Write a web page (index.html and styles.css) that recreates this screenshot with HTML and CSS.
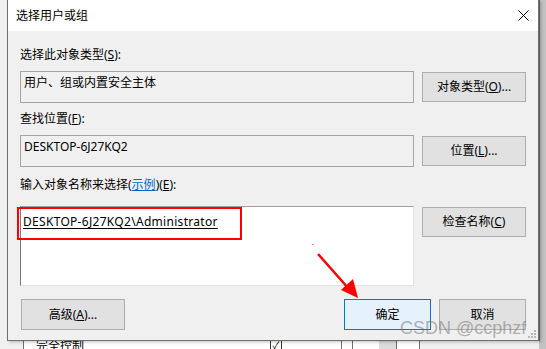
FILE: index.html
```html
<!DOCTYPE html>
<html lang="zh-CN">

<head>
    <meta charset="UTF-8">
    <meta name="viewport" content="width=device-width, initial-scale=1.0">
    <title>选择用户或组</title>
    <link rel="stylesheet" href="styles.css">
</head>

<body>
    <div class="desk">
        <!-- 后面的权限窗口，只露出一点 -->
        <div class="behind">
            <div class="cell name">完全控制</div>
            <div class="cell chk"><span class="box">✓</span></div>
            <div class="cell gap"></div>
            <div class="cell thin"></div>
            <div class="cell gap2"><span class="thumb"></span></div>
            <div class="cell last"></div>
        </div>

        <div class="dialog">
            <div class="titlebar">
                <span class="title">选择用户或组</span>
                <svg class="close" width="11" height="11" viewBox="0 0 11 11">
                    <path d="M0.5 0.5 L10.5 10.5 M10.5 0.5 L0.5 10.5" stroke="#000" stroke-width="1" fill="none" />
                </svg>
            </div>

            <div class="content">
                <div class="label">选择此对象类型(<u>S</u>):</div>
                <div class="row">
                    <div class="field">用户、组或内置安全主体</div>
                    <button class="btn">对象类型(<u>O</u>)...</button>
                </div>

                <div class="label l2">查找位置(<u>F</u>):</div>
                <div class="row">
                    <div class="field">DESKTOP-6J27KQ2</div>
                    <button class="btn">位置(<u>L</u>)...</button>
                </div>

                <div class="label l3">输入对象名称来选择(<a class="link">示例</a>)(<u>E</u>):</div>
                <div class="row tall">
                    <div class="field input">
                        <span class="resolved">DESKTOP-6J27KQ2\Administrator</span>
                        <span class="mark"></span>
                    </div>
                    <button class="btn">检查名称(<u>C</u>)</button>
                </div>

                <div class="actions">
                    <button class="btn adv">高级(<u>A</u>)...</button>
                    <button class="btn default">确定</button>
                    <button class="btn">取消</button>
                </div>
            </div>

            <svg class="grip" width="9" height="9" viewBox="0 0 9 9">
                <rect x="7" y="1" width="2" height="2" fill="#b8b8b8" />
                <rect x="4" y="4" width="2" height="2" fill="#b8b8b8" />
                <rect x="7" y="4" width="2" height="2" fill="#b8b8b8" />
                <rect x="1" y="7" width="2" height="2" fill="#b8b8b8" />
                <rect x="4" y="7" width="2" height="2" fill="#b8b8b8" />
                <rect x="7" y="7" width="2" height="2" fill="#b8b8b8" />
            </svg>
        </div>

        <!-- 标注：红色箭头 -->
        <svg class="arrow" width="546" height="349" viewBox="0 0 546 349">
            <rect x="312" y="244" width="2" height="1" fill="#f08080" />
            <line x1="318" y1="254" x2="349" y2="289" stroke="#f00" stroke-width="2.5" />
            <polygon points="358,298 341,290 353,279" fill="#f00" />
        </svg>

        <div class="watermark">CSDN @ccphzf</div>
    </div>
</body>

</html>
```

FILE: styles.css
```css
* {
    margin: 0;
    padding: 0;
    box-sizing: border-box;
}

body {
    width: 546px;
    height: 349px;
    overflow: hidden;
    background: #f0f0f0;
    font: 12px/16px "Noto Sans", "Noto Sans CJK SC", sans-serif;
    color: #000;
}

.desk {
    position: relative;
    width: 546px;
    height: 349px;
    background: linear-gradient(to right, #f0f0f0 539px, #c2c2c2 539px);
}

/* 后面窗口的列表 */
.behind {
    position: absolute;
    left: 23px;
    top: 333px;
    width: 397px;
    height: 16px;
    display: flex;
    background: #fff;
    border-left: 1px solid #6e6e6e;
    border-right: 1px solid #6e6e6e;
}

.cell {
    height: 16px;
}

.name {
    width: 246px;
    padding: 5px 0 0 12px;
    line-height: 16px;
}

.chk {
    width: 14px;
}

.box {
    display: block;
    width: 12px;
    height: 16px;
    margin-top: 6px;
    border: 1px solid #333;
    font-size: 10px;
    line-height: 10px;
    text-align: center;
}

.gap {
    width: 58px;
    border-right: 1px solid #6e6e6e;
}

.thin {
    width: 11px;
    border-right: 1px solid #6e6e6e;
}

.gap2 {
    width: 44px;
    border-right: 1px solid #6e6e6e;
    position: relative;
}

.thumb {
    position: absolute;
    right: 0;
    top: 8px;
    width: 17px;
    height: 8px;
    background: #dcdcdc;
}

.last {
    flex: 1;
}

/* 对话框 */
.dialog {
    position: absolute;
    left: 7px;
    top: 0;
    width: 532px;
    height: 341px;
    background: #f0f0f0;
    border: 1px solid #707070;
    border-top: 0;
    box-shadow: 1px 0 0 #5a5a5a, 2px 1px 3px rgba(0, 0, 0, 0.25);
}

.titlebar {
    height: 31px;
    display: flex;
    align-items: center;
    justify-content: space-between;
    padding: 0 9px 0 8px;
    background: #fff;
}

.close {
    display: block;
}

.content {
    padding: 16px 12px 10px;
}

.label {
    height: 16px;
    white-space: nowrap;
}

.l2 {
    margin-top: 8px;
}

.l3 {
    margin-top: 10px;
}

u {
    text-decoration-thickness: 1px;
    text-underline-offset: 1px;
}

.link {
    color: #0066cc;
    text-decoration: underline;
    text-decoration-thickness: 1px;
    text-underline-offset: 1px;
}

.row {
    display: grid;
    grid-template-columns: 394px 104px;
    column-gap: 8px;
    align-items: start;
    margin-top: 8px;
}

.row.tall {
    margin-top: 13px;
}

.field {
    height: 32px;
    padding: 3px;
    background: #f0f0f0;
    border: 1px solid #a5a5a5;
    white-space: nowrap;
}

.field.input {
    position: relative;
    height: 80px;
    padding: 7px 2px;
    background: #fff;
    border-color: #a0a0a0 #e3e3e3 #e3e3e3 #7a7a7a;
}

.resolved {
    letter-spacing: 0.3px;
    text-decoration: underline;
    text-decoration-thickness: 1px;
    text-underline-offset: 2px;
}

.mark {
    position: absolute;
    left: -4px;
    top: 0;
    width: 225px;
    height: 33px;
    border: 2px solid #f00;
}

.btn {
    height: 30px;
    margin-top: 1px;
    border: 1px solid #adadad;
    background: #e1e1e1;
    font: inherit;
    color: #000;
}

.actions {
    display: flex;
    gap: 8px;
    margin-top: 13px;
    padding-left: 1px;
}

.actions .btn {
    width: 87px;
    height: 31px;
    margin-top: 0;
}

.actions .adv {
    width: 104px;
    margin-right: auto;
}

.btn.default {
    border-color: #0078d7;
    background: #e5f1fb;
}

.grip {
    position: absolute;
    right: 2px;
    bottom: 2px;
}

/* 标注 */
.arrow {
    position: absolute;
    left: 0;
    top: 0;
}

.watermark {
    position: absolute;
    left: 400px;
    top: 317px;
    font: 18px/22px "Liberation Sans", sans-serif;
    color: rgba(110, 110, 110, 0.5);
    white-space: nowrap;
}
```
